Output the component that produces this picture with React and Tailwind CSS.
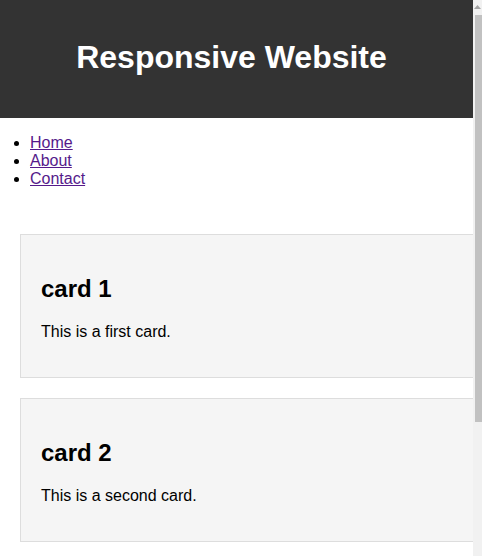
const cards = [
  { title: "card 1", text: "This is a first card." },
  { title: "card 2", text: "This is a second card." },
];

export default function App() {
  return (
    <div className="flex h-[556px] overflow-hidden bg-white text-black font-['Liberation_Sans',Arial,sans-serif] text-base">
      <div className="flex-1 min-w-0 overflow-hidden">
        <header className="h-[118px] bg-[#333333] text-white flex items-center justify-center pr-[10px] pb-1">
          <h1 className="text-[32px] font-bold leading-[37px]">Responsive Website</h1>
        </header>
        <nav>
          <ul className="list-disc mt-4 pl-[30px] leading-[18px]">
            <li>
              <a href="#" className="underline text-[#551a8b]">Home</a>
            </li>
            <li>
              <a href="#" className="underline text-[#551a8b]">About</a>
            </li>
            <li>
              <a href="#" className="underline text-[#551a8b]">Contact</a>
            </li>
          </ul>
        </nav>
        <main className="pt-[46px] pl-5">
          {cards.map((c) => (
            <div
              key={c.title}
              className="w-[calc(100%+60px)] mb-5 bg-[#f5f5f5] border border-[#dddddd] p-5"
            >
              <h2 className="text-2xl font-bold leading-[28px] my-5">{c.title}</h2>
              <p className="leading-[18px] mt-5 mb-4">{c.text}</p>
            </div>
          ))}
        </main>
      </div>
      {/* scrollbar strip */}
      <div className="w-[9px] shrink-0 bg-[#f1f1f1] flex flex-col items-end">
        <svg width="9" height="15" viewBox="0 0 9 15" className="shrink-0">
          <path d="M4.5 5 L8 9 L1 9 Z" fill="#a3a3a3" />
        </svg>
        <div className="w-[7px] h-[407px] bg-[#c1c1c1]" />
      </div>
    </div>
  );
}
